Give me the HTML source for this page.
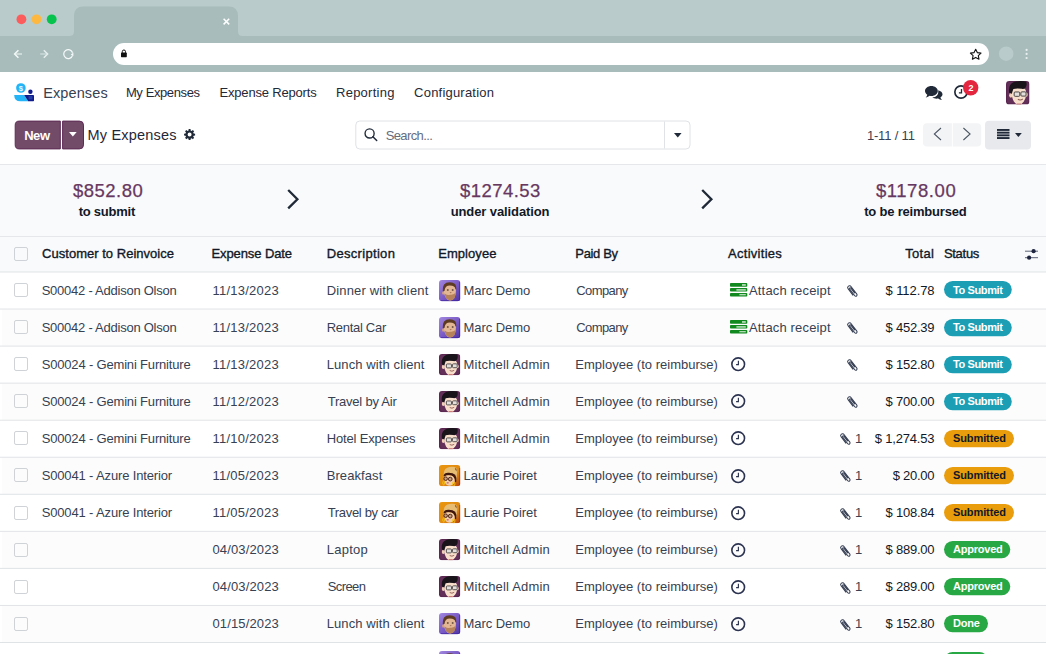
<!DOCTYPE html><html lang="en"><head><meta charset="utf-8"><title>Odoo - My Expenses</title><style>
*{box-sizing:border-box}
html,body{margin:0;padding:0}
body{width:1046px;height:654px;overflow:hidden;position:relative;background:#fff;font-family:'Liberation Sans',sans-serif;font-size:13px;color:#374151}
.t{position:absolute;white-space:pre}
.abs{position:absolute}
svg{position:absolute;overflow:visible}
.row{position:absolute;left:0;width:1046px}
.cb{position:absolute;left:14px;width:14px;height:14px;border:1px solid #d6d9de;border-radius:2px;background:#fff}
.badge{position:absolute;left:944px;height:17px;border-radius:9px}
.av{position:absolute;left:439px;width:21px;height:21px}
</style></head><body><header class="browser-chrome"><div class="abs" style="left:0;top:0;width:1046px;height:72px;background:#a7bcbb"></div><div class="abs" style="left:0;top:0;width:1046px;height:36px;background:#b9cbca"></div><svg style="left:0;top:0" width="1046" height="72" viewBox="0 0 1046 72"><path d="M69.5 36 Q74 36 74 31.5 L74 16 Q74 6.5 83.5 6.5 L228.5 6.5 Q238 6.5 238 16 L238 31.5 Q238 36 242.5 36 Z" fill="#a7bcbb"/><circle cx="21.4" cy="19.3" r="4.9" fill="#fd5c5c"/><circle cx="36.5" cy="19.3" r="4.9" fill="#fdb841"/><circle cx="51.7" cy="19.3" r="4.9" fill="#05c34c"/><path d="M223.6 18.8 L229.2 24.4 M229.2 18.8 L223.6 24.4" stroke="#fff" stroke-width="1.5" fill="none"/><path d="M22 54 H15.4" stroke="#dde7e6" stroke-width="1.4" fill="none"/><path d="M18.4 50.2 L14.6 54 L18.4 57.8" stroke="#f4f8f7" stroke-width="1.5" fill="none"/><path d="M40.2 54 H46.8" stroke="#cfdcdb" stroke-width="1.4" fill="none"/><path d="M43.8 50.2 L47.6 54 L43.8 57.8" stroke="#e6eeed" stroke-width="1.5" fill="none"/><path d="M72.55 52.8 A4.5 4.5 0 1 0 72.55 55.4" stroke="#f6f9f9" stroke-width="1.25" fill="none"/><path d="M70.7 54.6 L73.4 52.4 L73.4 56 Z" fill="#f6f9f9"/><rect x="113" y="43" width="876" height="22" rx="11" fill="#fff"/><rect x="121" y="52.6" width="5.8" height="4.6" rx="0.6" fill="#111"/><path d="M122.3 52.8 V51.6 A1.6 1.6 0 0 1 125.5 51.6 V52.8" stroke="#111" stroke-width="1" fill="none"/><path d="M975.7 49.2 L977.3 52.6 L981 53.1 L978.3 55.6 L979 59.2 L975.7 57.4 L972.4 59.2 L973.1 55.6 L970.4 53.1 L974.1 52.6 Z" stroke="#111" stroke-width="1.1" fill="none" stroke-linejoin="round"/><circle cx="1006.2" cy="53.7" r="7.3" fill="#b9cbca"/><circle cx="1026.6" cy="49.9" r="1.1" fill="#e8efee"/><circle cx="1026.6" cy="53.9" r="1.1" fill="#e8efee"/><circle cx="1026.6" cy="58" r="1.1" fill="#e8efee"/></svg></header><nav class="o_main_navbar"><svg style="left:13.5px;top:83.3px" width="20.5" height="18.6" viewBox="0 0 20.5 18.6"><circle cx="6.9" cy="5" r="4.8" fill="#22b4f6"/><text x="6.9" y="7.7" font-size="7.6" font-weight="700" fill="#e9f7fe" text-anchor="middle" font-family="Liberation Sans, sans-serif">$</text><circle cx="16.4" cy="8.7" r="2.2" fill="#111c8c"/><path d="M0.2 12 H10.1 L14.2 18.3 H6.4 Q0.2 18.3 0.2 12 Z" fill="#22b4f6"/><path d="M10.1 12 H19.3 Q20 12 20 12.7 V17.6 Q20 18.3 19.3 18.3 H14.2 Z" fill="#111c8c"/><rect x="14.6" y="13.1" width="3.8" height="3.3" fill="#2440a4"/></svg><span class="t" style="left:43.20px;top:82px;font-size:14.5px;line-height:22px;color:#374151;letter-spacing:0.110px;">Expenses</span><span class="t" style="left:125.90px;top:83px;font-size:13px;line-height:20px;color:#1f2937;letter-spacing:-0.393px;">My Expenses</span><span class="t" style="left:219.50px;top:83px;font-size:13px;line-height:20px;color:#1f2937;letter-spacing:-0.180px;">Expense Reports</span><span class="t" style="left:336.00px;top:83px;font-size:13px;line-height:20px;color:#1f2937;letter-spacing:0.258px;">Reporting</span><span class="t" style="left:414.10px;top:83px;font-size:13px;line-height:20px;color:#1f2937;letter-spacing:0.209px;">Configuration</span><svg style="left:924.5px;top:85.5px" width="17.5" height="14.5" viewBox="0 0 17.5 14.5"><path d="M13.2 4.2 C15.7 4.8 17.5 6.4 17.5 8.3 C17.5 9.6 16.7 10.7 15.4 11.5 C15.6 12.4 16.2 13.3 17 14 C15.5 14 14.1 13.4 13.2 12.6 C12.7 12.7 12.1 12.7 11.6 12.7 C9.9 12.7 8.4 12.2 7.3 11.5 C11.2 11.2 13.9 8.6 13.2 4.2 Z" fill="#1f2937"/><path d="M6.4 0 C9.9 0 12.8 2.2 12.8 5 C12.8 7.8 9.9 10 6.4 10 C5.8 10 5.2 9.9 4.7 9.8 C3.7 10.7 2.3 11.3 0.7 11.4 C1.5 10.7 2.1 9.8 2.3 8.8 C0.9 7.9 0 6.5 0 5 C0 2.2 2.9 0 6.4 0 Z" fill="#1f2937"/></svg><svg style="left:954.2px;top:85.1px" width="14" height="14" viewBox="0 0 14 14"><circle cx="7" cy="7" r="6.15" stroke="#1f2937" stroke-width="1.65" fill="#fff"/><path d="M7.5 3.9 V7.9 H4.9" stroke="#1f2937" stroke-width="1.3" fill="none"/></svg><svg style="left:963.2px;top:79.7px" width="15.4" height="15.4" viewBox="0 0 15.4 15.4"><circle cx="7.7" cy="7.7" r="7.7" fill="#e4273f"/></svg><span class="t" style="left:968.60px;top:81px;font-size:9px;line-height:14px;color:#fff;font-weight:700;">2</span><svg style="left:1005.5px;top:80.5px" width="23.5" height="23.5" viewBox="0 0 21 21"><defs><clipPath id="cpa"><rect width="21" height="21" rx="3"/></clipPath></defs><g clip-path="url(#cpa)"><rect width="21" height="21" fill="#5a2751"/><rect x="1" y="1" width="19" height="19" rx="2.4" fill="#633059"/><ellipse cx="4.3" cy="12.8" rx="1.5" ry="2.1" fill="#f0d0ba"/><ellipse cx="18.3" cy="12.2" rx="1.1" ry="1.9" fill="#f0d0ba"/><path d="M5 9.2 Q5 5.4 11.6 5.4 Q18 5.4 18 10 Q18.2 15.6 15.8 18.6 Q13.8 21.4 11.6 21.4 Q9 21.4 7 18.4 Q5 15 5 9.2 Z" fill="#f8dfcc"/><path d="M2.8 10.4 Q1.8 3.2 7 1 Q12.6 -0.8 18 0.6 Q19.2 3.2 17.4 6 Q16.4 7.4 14 7 Q9.6 6.2 6.6 7.2 Q5.8 9.2 5.2 11.4 Z" fill="#19141a"/><rect x="7.3" y="9.8" width="5" height="3.9" rx="0.9" fill="#e3dfdd" stroke="#45403f" stroke-width="0.85"/><rect x="13.3" y="9.7" width="4.6" height="3.8" rx="0.9" fill="#e3dfdd" stroke="#45403f" stroke-width="0.85"/><path d="M10.6 16.3 Q12.7 17.7 15 16.1" stroke="#8f5d52" stroke-width="0.9" fill="none"/><path d="M9.4 21 H13.6 V20.3 H9.4 Z" fill="#a3222e"/></g></svg></nav><section class="o_control_panel"><svg style="left:0;top:0" width="100" height="160" viewBox="0 0 100 160"><path d="M19.2 121.1 H60.3 V148.9 H19.2 Q15.2 148.9 15.2 144.9 V125.1 Q15.2 121.1 19.2 121.1 Z" fill="#714B67" stroke="#5e2b57" stroke-width="1"/><path d="M62.6 121.1 H79.5 Q83.5 121.1 83.5 125.1 V144.9 Q83.5 148.9 79.5 148.9 H62.6 Z" fill="#714B67" stroke="#5e2b57" stroke-width="1"/></svg><span class="t" style="left:24.20px;top:126px;font-size:13px;line-height:20px;color:#fff;font-weight:700;letter-spacing:-0.459px;">New</span><svg style="left:69px;top:131.9px" width="7.7" height="4.6" viewBox="0 0 7.7 4.6"><path d="M0 0 H7.7 L3.85 4.6 Z" fill="#fff"/></svg><span class="t" style="left:87.50px;top:124px;font-size:14.5px;line-height:22px;color:#1f2937;letter-spacing:0.201px;">My Expenses</span><svg style="left:184.2px;top:129.3px" width="11.2" height="11.2" viewBox="0 0 11.2 11.2"><path d="M11.12 4.65 L11.12 6.55 L9.67 6.64 L9.21 7.74 L10.17 8.83 L8.83 10.17 L7.74 9.21 L6.64 9.67 L6.55 11.12 L4.65 11.12 L4.56 9.67 L3.46 9.21 L2.37 10.17 L1.03 8.83 L1.99 7.74 L1.53 6.64 L0.08 6.55 L0.08 4.65 L1.53 4.56 L1.99 3.46 L1.03 2.37 L2.37 1.03 L3.46 1.99 L4.56 1.53 L4.65 0.08 L6.55 0.08 L6.64 1.53 L7.74 1.99 L8.83 1.03 L10.17 2.37 L9.21 3.46 L9.67 4.56 Z M7.6 5.6 A2 2 0 1 0 3.6 5.6 A2 2 0 1 0 7.6 5.6 Z" fill="#1f2937" fill-rule="evenodd"/></svg><svg style="left:0;top:0" width="700" height="160" viewBox="0 0 700 160"><rect x="355.8" y="121" width="334.2" height="28" rx="4" fill="#fff" stroke="#dfe2e6" stroke-width="1"/><path d="M664.5 121.5 V148.5" stroke="#dfe2e6" stroke-width="1"/></svg><svg style="left:364.4px;top:127.7px" width="13.4" height="13.2" viewBox="0 0 13.4 13.2"><circle cx="5.6" cy="5.5" r="4.55" stroke="#1f2937" stroke-width="1.35" fill="none"/><path d="M8.9 8.8 L12.7 12.5" stroke="#1f2937" stroke-width="1.5" stroke-linecap="round"/></svg><span class="t" style="left:385.70px;top:126px;font-size:13px;line-height:20px;color:#666d7c;letter-spacing:-0.614px;">Search...</span><svg style="left:673.7px;top:132.7px" width="7.6" height="4.6" viewBox="0 0 7.6 4.6"><path d="M0 0 H7.6 L3.8 4.6 Z" fill="#1f2937"/></svg><span class="t" style="left:866.90px;top:126px;font-size:13px;line-height:20px;color:#374151;letter-spacing:-0.169px;">1-11 / 11</span><svg style="left:0;top:0" width="1046" height="160" viewBox="0 0 1046 160"><path d="M927 123.2 H951.9 V146.6 H927 Q923 146.6 923 142.6 V127.2 Q923 123.2 927 123.2 Z" fill="#f3f4f6"/><path d="M952.8 123.2 H977.2 Q981.2 123.2 981.2 127.2 V142.6 Q981.2 146.6 977.2 146.6 H952.8 Z" fill="#f3f4f6"/><rect x="985" y="120.7" width="46" height="28.7" rx="4" fill="#e7e9ed"/></svg><svg style="left:923px;top:122.3px" width="58" height="24" viewBox="0 0 58 24"><path d="M18 6 L11.3 12 L18 18" stroke="#4b5563" stroke-width="1.05" fill="none"/><path d="M40.4 6 L47.1 12 L40.4 18" stroke="#4b5563" stroke-width="1.05" fill="none"/></svg><svg style="left:997px;top:129.4px" width="12.5" height="10" viewBox="0 0 12.5 10"><rect x="0" y="0" width="12.5" height="1.9" fill="#1f2937"/><rect x="0" y="2.7" width="12.5" height="1.9" fill="#1f2937"/><rect x="0" y="5.4" width="12.5" height="1.9" fill="#1f2937"/><rect x="0" y="8.1" width="12.5" height="1.9" fill="#1f2937"/></svg><svg style="left:1015px;top:132.8px" width="6.8" height="4" viewBox="0 0 6.8 4"><path d="M0 0 H6.8 L3.4 4 Z" fill="#1f2937"/></svg></section><section class="o_expense_dashboard"><div class="abs" style="left:0;top:164px;width:1046px;height:73px;background:#f9fafb;border-top:1px solid #e5e7eb;border-bottom:1px solid #e5e7eb"></div><span class="t" style="left:73.00px;top:177px;font-size:18.5px;line-height:28px;color:#68375f;letter-spacing:0.469px;-webkit-text-stroke:0.25px #68375f;">$852.80</span><span class="t" style="left:78.70px;top:202px;font-size:13px;line-height:20px;color:#111827;font-weight:700;letter-spacing:-0.233px;">to submit</span><span class="t" style="left:460.10px;top:177px;font-size:18.5px;line-height:28px;color:#68375f;letter-spacing:0.418px;-webkit-text-stroke:0.25px #68375f;">$1274.53</span><span class="t" style="left:450.70px;top:202px;font-size:13px;line-height:20px;color:#111827;font-weight:700;letter-spacing:-0.104px;">under validation</span><span class="t" style="left:875.90px;top:177px;font-size:18.5px;line-height:28px;color:#68375f;letter-spacing:0.571px;-webkit-text-stroke:0.25px #68375f;">$1178.00</span><span class="t" style="left:864.20px;top:202px;font-size:13px;line-height:20px;color:#111827;font-weight:700;letter-spacing:-0.195px;">to be reimbursed</span><svg style="left:287.4px;top:188.8px" width="12" height="20.4" viewBox="0 0 12 20.4"><path d="M1.2 1 L10.4 10.2 L1.2 19.4" stroke="#1f2937" stroke-width="2.3" fill="none"/></svg><svg style="left:700.6px;top:188.8px" width="12" height="20.4" viewBox="0 0 12 20.4"><path d="M1.2 1 L10.4 10.2 L1.2 19.4" stroke="#1f2937" stroke-width="2.3" fill="none"/></svg></section><main class="o_list_view"><div class="abs" style="left:0;top:237px;width:1046px;height:35px;background:#f9fafb"></div><div class="row" style="top:272px;height:37px;background:#fff"></div><div class="row" style="top:309px;height:37px;background:#fcfcfd;left:2px;width:1044px"></div><div class="row" style="top:346px;height:37px;background:#fff"></div><div class="row" style="top:383px;height:37px;background:#fcfcfd;left:2px;width:1044px"></div><div class="row" style="top:420px;height:37px;background:#fff"></div><div class="row" style="top:457px;height:37px;background:#fcfcfd;left:2px;width:1044px"></div><div class="row" style="top:494px;height:37px;background:#fff"></div><div class="row" style="top:531px;height:37px;background:#fcfcfd;left:2px;width:1044px"></div><div class="row" style="top:568px;height:37px;background:#fff"></div><div class="row" style="top:605px;height:37px;background:#fcfcfd;left:2px;width:1044px"></div><div class="row" style="top:642px;height:37px;background:#fff"></div><div class="abs" style="left:0px;top:271px;width:1046px;height:1px;background:rgba(224,227,230,0.50)"></div><div class="abs" style="left:0px;top:272px;width:1046px;height:1px;background:rgba(224,227,230,0.50)"></div><div class="abs" style="left:0px;top:308px;width:1046px;height:1px;background:rgba(224,227,230,0.45)"></div><div class="abs" style="left:0px;top:309px;width:1046px;height:1px;background:rgba(224,227,230,0.55)"></div><div class="abs" style="left:0px;top:345px;width:1046px;height:1px;background:rgba(224,227,230,0.40)"></div><div class="abs" style="left:0px;top:346px;width:1046px;height:1px;background:rgba(224,227,230,0.60)"></div><div class="abs" style="left:0px;top:382px;width:1046px;height:1px;background:rgba(224,227,230,0.35)"></div><div class="abs" style="left:0px;top:383px;width:1046px;height:1px;background:rgba(224,227,230,0.65)"></div><div class="abs" style="left:0px;top:419px;width:1046px;height:1px;background:rgba(224,227,230,0.30)"></div><div class="abs" style="left:0px;top:420px;width:1046px;height:1px;background:rgba(224,227,230,0.70)"></div><div class="abs" style="left:0px;top:456px;width:1046px;height:1px;background:rgba(224,227,230,0.25)"></div><div class="abs" style="left:0px;top:457px;width:1046px;height:1px;background:rgba(224,227,230,0.75)"></div><div class="abs" style="left:0px;top:493px;width:1046px;height:1px;background:rgba(224,227,230,0.20)"></div><div class="abs" style="left:0px;top:494px;width:1046px;height:1px;background:rgba(224,227,230,0.80)"></div><div class="abs" style="left:0px;top:530px;width:1046px;height:1px;background:rgba(224,227,230,0.15)"></div><div class="abs" style="left:0px;top:531px;width:1046px;height:1px;background:rgba(224,227,230,0.85)"></div><div class="abs" style="left:0px;top:567px;width:1046px;height:1px;background:rgba(224,227,230,0.10)"></div><div class="abs" style="left:0px;top:568px;width:1046px;height:1px;background:rgba(224,227,230,0.90)"></div><div class="abs" style="left:0px;top:604px;width:1046px;height:1px;background:rgba(224,227,230,0.05)"></div><div class="abs" style="left:0px;top:605px;width:1046px;height:1px;background:rgba(224,227,230,0.95)"></div><div class="abs" style="left:0px;top:642px;width:1046px;height:1px;background:rgba(224,227,230,1.00)"></div><div class="abs" style="left:0px;top:679px;width:1046px;height:1px;background:rgba(224,227,230,0.95)"></div><div class="abs" style="left:0px;top:680px;width:1046px;height:1px;background:rgba(224,227,230,0.05)"></div><svg style="left:14px;top:247.3px" width="14" height="14" viewBox="0 0 14 14"><rect x="0.5" y="0.5" width="13" height="13" rx="1.6" fill="none" stroke="#cfd2d6"/></svg><span class="t" style="left:42.10px;top:244px;font-size:13px;line-height:20px;color:#111827;-webkit-text-stroke:0.35px currentColor;letter-spacing:0.019px;">Customer to Reinvoice</span><span class="t" style="left:211.40px;top:244px;font-size:13px;line-height:20px;color:#111827;-webkit-text-stroke:0.35px currentColor;letter-spacing:-0.089px;">Expense Date</span><span class="t" style="left:326.70px;top:244px;font-size:13px;line-height:20px;color:#111827;-webkit-text-stroke:0.35px currentColor;letter-spacing:0.315px;">Description</span><span class="t" style="left:438.20px;top:244px;font-size:13px;line-height:20px;color:#111827;-webkit-text-stroke:0.35px currentColor;letter-spacing:0.067px;">Employee</span><span class="t" style="left:575.30px;top:244px;font-size:13px;line-height:20px;color:#111827;-webkit-text-stroke:0.35px currentColor;letter-spacing:-0.342px;">Paid By</span><span class="t" style="left:728.00px;top:244px;font-size:13px;line-height:20px;color:#111827;-webkit-text-stroke:0.35px currentColor;letter-spacing:0.285px;">Activities</span><span class="t" style="left:943.90px;top:244px;font-size:13px;line-height:20px;color:#111827;-webkit-text-stroke:0.35px currentColor;letter-spacing:-0.281px;">Status</span><span class="t" style="left:905.30px;top:244px;font-size:13px;line-height:20px;color:#111827;-webkit-text-stroke:0.35px currentColor;letter-spacing:0.270px;">Total</span><svg style="left:1025.4px;top:248.6px" width="13" height="11" viewBox="0 0 13 11"><path d="M0 2.2 H13 M0 8.7 H13" stroke="#5a6275" stroke-width="1"/><circle cx="8.6" cy="2.2" r="2.1" fill="#1f2540"/><circle cx="4.1" cy="8.7" r="2.1" fill="#1f2540"/></svg><svg style="left:14px;top:283.20px" width="14" height="14" viewBox="0 0 14 14"><rect x="0.5" y="0.5" width="13" height="13" rx="1.6" fill="none" stroke="#cfd2d6"/></svg><span class="t" style="left:41.70px;top:281px;font-size:13px;line-height:20px;color:#374151;letter-spacing:-0.247px;">S00042 - Addison Olson</span><span class="t" style="left:212.50px;top:281px;font-size:13px;line-height:20px;color:#374151;letter-spacing:0.237px;">11/13/2023</span><span class="t" style="left:326.70px;top:281px;font-size:13px;line-height:20px;color:#374151;letter-spacing:0.154px;">Dinner with client</span><svg style="left:438.9px;top:280.0px" width="21.3" height="21.3" viewBox="0 0 21 21"><defs><clipPath id="cm0"><rect width="21" height="21" rx="3"/></clipPath><linearGradient id="gm0" x1="0" y1="0" x2="1" y2="1"><stop offset="0" stop-color="#a287e0"/><stop offset="0.55" stop-color="#7758c4"/><stop offset="1" stop-color="#5034a4"/></linearGradient></defs><g clip-path="url(#cm0)"><rect width="21" height="21" fill="url(#gm0)"/><path d="M20.6 2 V21 M2 20.6 H21" stroke="#3b1f9c" stroke-width="0.9" fill="none"/><ellipse cx="4.1" cy="12.8" rx="1" ry="1.8" fill="#d6a27f"/><path d="M4.6 9.5 Q4.6 4.6 10.7 4.6 Q16.7 4.6 16.7 9.8 Q16.9 14.4 15.1 17.4 Q13.1 20.3 10.9 20.3 Q8.4 20.3 6.4 17 Q4.6 13.8 4.6 9.5 Z" fill="#e3b793"/><path d="M3.7 11.2 Q2.9 2.2 10.5 2.2 Q17.8 2.2 17.1 9.4 L16.2 9 Q15.9 5.6 10.7 5.5 Q6 5.5 5.4 10.8 Z" fill="#5c3b22"/><path d="M5.5 13.2 Q8.3 15.2 10.8 14.5 Q13.4 15.2 16.3 12.9 Q16.3 17.6 14.1 19.3 Q11 21 8.2 19.1 Q5.8 17 5.5 13.2 Z" fill="#b5825b"/><ellipse cx="8.7" cy="9.8" rx="1" ry="0.7" fill="#46332a"/><ellipse cx="13.5" cy="9.8" rx="1" ry="0.7" fill="#46332a"/><ellipse cx="11.5" cy="12.4" rx="0.9" ry="0.55" fill="#a8755a"/></g></svg><span class="t" style="left:463.60px;top:281px;font-size:13px;line-height:20px;color:#374151;letter-spacing:-0.068px;">Marc Demo</span><span class="t" style="left:576.30px;top:281px;font-size:13px;line-height:20px;color:#374151;letter-spacing:-0.606px;">Company</span><svg style="left:729.8px;top:283.1px" width="17.3" height="13.6" viewBox="0 0 17.3 13.6"><rect x="0" y="0.1" width="17.3" height="3.6" rx="0.8" fill="#12891f"/><rect x="0" y="5.1" width="17.3" height="3.5" rx="0.8" fill="#12891f"/><rect x="0" y="10" width="17.3" height="3.6" rx="0.8" fill="#12891f"/><rect x="12" y="1.1" width="3.8" height="1.7" fill="#b9dfbc"/><rect x="6.4" y="6" width="9.4" height="1.8" fill="#9fd2a4"/><rect x="9.4" y="11.2" width="6.4" height="1.1" fill="#d6eed8"/></svg><span class="t" style="left:749.00px;top:281px;font-size:13px;line-height:20px;color:#374151;letter-spacing:0.164px;">Attach receipt</span><svg style="left:846.6px;top:285.2px" width="10.7" height="11.8" viewBox="0 0 10.7 11.8"><g transform="translate(5.35 6.3) rotate(143) translate(-2.3 -7)"><path d="M4.15 3.6 V11.7 A1.85 1.85 0 0 1 0.45 11.7 V2 A1.3 1.3 0 0 1 3.05 2 V10.4 A0.75 0.75 0 0 1 1.55 10.4 V4.4" stroke="#343d52" stroke-width="1.0" fill="none" stroke-linecap="round"/></g></svg><span class="t" style="left:885.50px;top:281px;font-size:13px;line-height:20px;color:#111827;letter-spacing:-0.087px;">$ 112.78</span><svg style="left:943.8px;top:281.45px" width="67.8" height="17.2" viewBox="0 0 67.8 17.2"><rect width="67.8" height="17.2" rx="8.6" fill="#1c9fb5"/></svg><span class="t" style="left:953.00px;top:282px;font-size:11px;line-height:16px;color:#fff;font-weight:700;letter-spacing:-0.386px;">To Submit</span><svg style="left:14px;top:320.25px" width="14" height="14" viewBox="0 0 14 14"><rect x="0.5" y="0.5" width="13" height="13" rx="1.6" fill="none" stroke="#cfd2d6"/></svg><span class="t" style="left:41.70px;top:318px;font-size:13px;line-height:20px;color:#374151;letter-spacing:-0.247px;">S00042 - Addison Olson</span><span class="t" style="left:212.50px;top:318px;font-size:13px;line-height:20px;color:#374151;letter-spacing:0.237px;">11/13/2023</span><span class="t" style="left:326.70px;top:318px;font-size:13px;line-height:20px;color:#374151;letter-spacing:-0.290px;">Rental Car</span><svg style="left:438.9px;top:317.05px" width="21.3" height="21.3" viewBox="0 0 21 21"><defs><clipPath id="cm1"><rect width="21" height="21" rx="3"/></clipPath><linearGradient id="gm1" x1="0" y1="0" x2="1" y2="1"><stop offset="0" stop-color="#a287e0"/><stop offset="0.55" stop-color="#7758c4"/><stop offset="1" stop-color="#5034a4"/></linearGradient></defs><g clip-path="url(#cm1)"><rect width="21" height="21" fill="url(#gm1)"/><path d="M20.6 2 V21 M2 20.6 H21" stroke="#3b1f9c" stroke-width="0.9" fill="none"/><ellipse cx="4.1" cy="12.8" rx="1" ry="1.8" fill="#d6a27f"/><path d="M4.6 9.5 Q4.6 4.6 10.7 4.6 Q16.7 4.6 16.7 9.8 Q16.9 14.4 15.1 17.4 Q13.1 20.3 10.9 20.3 Q8.4 20.3 6.4 17 Q4.6 13.8 4.6 9.5 Z" fill="#e3b793"/><path d="M3.7 11.2 Q2.9 2.2 10.5 2.2 Q17.8 2.2 17.1 9.4 L16.2 9 Q15.9 5.6 10.7 5.5 Q6 5.5 5.4 10.8 Z" fill="#5c3b22"/><path d="M5.5 13.2 Q8.3 15.2 10.8 14.5 Q13.4 15.2 16.3 12.9 Q16.3 17.6 14.1 19.3 Q11 21 8.2 19.1 Q5.8 17 5.5 13.2 Z" fill="#b5825b"/><ellipse cx="8.7" cy="9.8" rx="1" ry="0.7" fill="#46332a"/><ellipse cx="13.5" cy="9.8" rx="1" ry="0.7" fill="#46332a"/><ellipse cx="11.5" cy="12.4" rx="0.9" ry="0.55" fill="#a8755a"/></g></svg><span class="t" style="left:463.60px;top:318px;font-size:13px;line-height:20px;color:#374151;letter-spacing:-0.068px;">Marc Demo</span><span class="t" style="left:576.30px;top:318px;font-size:13px;line-height:20px;color:#374151;letter-spacing:-0.606px;">Company</span><svg style="left:729.8px;top:320.15000000000003px" width="17.3" height="13.6" viewBox="0 0 17.3 13.6"><rect x="0" y="0.1" width="17.3" height="3.6" rx="0.8" fill="#12891f"/><rect x="0" y="5.1" width="17.3" height="3.5" rx="0.8" fill="#12891f"/><rect x="0" y="10" width="17.3" height="3.6" rx="0.8" fill="#12891f"/><rect x="12" y="1.1" width="3.8" height="1.7" fill="#b9dfbc"/><rect x="6.4" y="6" width="9.4" height="1.8" fill="#9fd2a4"/><rect x="9.4" y="11.2" width="6.4" height="1.1" fill="#d6eed8"/></svg><span class="t" style="left:749.00px;top:318px;font-size:13px;line-height:20px;color:#374151;letter-spacing:0.164px;">Attach receipt</span><svg style="left:846.6px;top:322.25px" width="10.7" height="11.8" viewBox="0 0 10.7 11.8"><g transform="translate(5.35 6.3) rotate(143) translate(-2.3 -7)"><path d="M4.15 3.6 V11.7 A1.85 1.85 0 0 1 0.45 11.7 V2 A1.3 1.3 0 0 1 3.05 2 V10.4 A0.75 0.75 0 0 1 1.55 10.4 V4.4" stroke="#343d52" stroke-width="1.0" fill="none" stroke-linecap="round"/></g></svg><span class="t" style="left:885.50px;top:318px;font-size:13px;line-height:20px;color:#111827;letter-spacing:-0.225px;">$ 452.39</span><svg style="left:943.8px;top:318.50px" width="67.8" height="17.2" viewBox="0 0 67.8 17.2"><rect width="67.8" height="17.2" rx="8.6" fill="#1c9fb5"/></svg><span class="t" style="left:953.00px;top:319px;font-size:11px;line-height:16px;color:#fff;font-weight:700;letter-spacing:-0.386px;">To Submit</span><svg style="left:14px;top:357.30px" width="14" height="14" viewBox="0 0 14 14"><rect x="0.5" y="0.5" width="13" height="13" rx="1.6" fill="none" stroke="#cfd2d6"/></svg><span class="t" style="left:41.70px;top:355px;font-size:13px;line-height:20px;color:#374151;letter-spacing:-0.173px;">S00024 - Gemini Furniture</span><span class="t" style="left:212.50px;top:355px;font-size:13px;line-height:20px;color:#374151;letter-spacing:0.237px;">11/13/2023</span><span class="t" style="left:326.70px;top:355px;font-size:13px;line-height:20px;color:#374151;letter-spacing:0.100px;">Lunch with client</span><svg style="left:438.9px;top:354.1px" width="21.3" height="21.3" viewBox="0 0 21 21"><defs><clipPath id="cpa2"><rect width="21" height="21" rx="3"/></clipPath></defs><g clip-path="url(#cpa2)"><rect width="21" height="21" fill="#5a2751"/><rect x="1" y="1" width="19" height="19" rx="2.4" fill="#633059"/><ellipse cx="4.3" cy="12.8" rx="1.5" ry="2.1" fill="#f0d0ba"/><ellipse cx="18.3" cy="12.2" rx="1.1" ry="1.9" fill="#f0d0ba"/><path d="M5 9.2 Q5 5.4 11.6 5.4 Q18 5.4 18 10 Q18.2 15.6 15.8 18.6 Q13.8 21.4 11.6 21.4 Q9 21.4 7 18.4 Q5 15 5 9.2 Z" fill="#f8dfcc"/><path d="M2.8 10.4 Q1.8 3.2 7 1 Q12.6 -0.8 18 0.6 Q19.2 3.2 17.4 6 Q16.4 7.4 14 7 Q9.6 6.2 6.6 7.2 Q5.8 9.2 5.2 11.4 Z" fill="#19141a"/><rect x="7.3" y="9.8" width="5" height="3.9" rx="0.9" fill="#e3dfdd" stroke="#45403f" stroke-width="0.85"/><rect x="13.3" y="9.7" width="4.6" height="3.8" rx="0.9" fill="#e3dfdd" stroke="#45403f" stroke-width="0.85"/><path d="M10.6 16.3 Q12.7 17.7 15 16.1" stroke="#8f5d52" stroke-width="0.9" fill="none"/><path d="M9.4 21 H13.6 V20.3 H9.4 Z" fill="#a3222e"/></g></svg><span class="t" style="left:463.60px;top:355px;font-size:13px;line-height:20px;color:#374151;letter-spacing:0.185px;">Mitchell Admin</span><span class="t" style="left:575.30px;top:355px;font-size:13px;line-height:20px;color:#374151;letter-spacing:0.014px;">Employee (to reimburse)</span><svg style="left:731.05px;top:357.35px" width="14.4" height="14.4" viewBox="0 0 14.4 14.4"><circle cx="7.2" cy="7.2" r="6.35" stroke="#2b3350" stroke-width="1.6" fill="none"/><path d="M7.4 3.8 V7.7 H5.1" stroke="#2b3350" stroke-width="1.15" fill="none"/></svg><svg style="left:846.6px;top:359.3px" width="10.7" height="11.8" viewBox="0 0 10.7 11.8"><g transform="translate(5.35 6.3) rotate(143) translate(-2.3 -7)"><path d="M4.15 3.6 V11.7 A1.85 1.85 0 0 1 0.45 11.7 V2 A1.3 1.3 0 0 1 3.05 2 V10.4 A0.75 0.75 0 0 1 1.55 10.4 V4.4" stroke="#343d52" stroke-width="1.0" fill="none" stroke-linecap="round"/></g></svg><span class="t" style="left:885.50px;top:355px;font-size:13px;line-height:20px;color:#111827;letter-spacing:-0.225px;">$ 152.80</span><svg style="left:943.8px;top:355.55px" width="67.8" height="17.2" viewBox="0 0 67.8 17.2"><rect width="67.8" height="17.2" rx="8.6" fill="#1c9fb5"/></svg><span class="t" style="left:953.00px;top:356px;font-size:11px;line-height:16px;color:#fff;font-weight:700;letter-spacing:-0.386px;">To Submit</span><svg style="left:14px;top:394.35px" width="14" height="14" viewBox="0 0 14 14"><rect x="0.5" y="0.5" width="13" height="13" rx="1.6" fill="none" stroke="#cfd2d6"/></svg><span class="t" style="left:41.70px;top:392px;font-size:13px;line-height:20px;color:#374151;letter-spacing:-0.173px;">S00024 - Gemini Furniture</span><span class="t" style="left:212.50px;top:392px;font-size:13px;line-height:20px;color:#374151;letter-spacing:0.237px;">11/12/2023</span><span class="t" style="left:327.70px;top:392px;font-size:13px;line-height:20px;color:#374151;letter-spacing:-0.221px;">Travel by Air</span><svg style="left:438.9px;top:391.15px" width="21.3" height="21.3" viewBox="0 0 21 21"><defs><clipPath id="cpa3"><rect width="21" height="21" rx="3"/></clipPath></defs><g clip-path="url(#cpa3)"><rect width="21" height="21" fill="#5a2751"/><rect x="1" y="1" width="19" height="19" rx="2.4" fill="#633059"/><ellipse cx="4.3" cy="12.8" rx="1.5" ry="2.1" fill="#f0d0ba"/><ellipse cx="18.3" cy="12.2" rx="1.1" ry="1.9" fill="#f0d0ba"/><path d="M5 9.2 Q5 5.4 11.6 5.4 Q18 5.4 18 10 Q18.2 15.6 15.8 18.6 Q13.8 21.4 11.6 21.4 Q9 21.4 7 18.4 Q5 15 5 9.2 Z" fill="#f8dfcc"/><path d="M2.8 10.4 Q1.8 3.2 7 1 Q12.6 -0.8 18 0.6 Q19.2 3.2 17.4 6 Q16.4 7.4 14 7 Q9.6 6.2 6.6 7.2 Q5.8 9.2 5.2 11.4 Z" fill="#19141a"/><rect x="7.3" y="9.8" width="5" height="3.9" rx="0.9" fill="#e3dfdd" stroke="#45403f" stroke-width="0.85"/><rect x="13.3" y="9.7" width="4.6" height="3.8" rx="0.9" fill="#e3dfdd" stroke="#45403f" stroke-width="0.85"/><path d="M10.6 16.3 Q12.7 17.7 15 16.1" stroke="#8f5d52" stroke-width="0.9" fill="none"/><path d="M9.4 21 H13.6 V20.3 H9.4 Z" fill="#a3222e"/></g></svg><span class="t" style="left:463.60px;top:392px;font-size:13px;line-height:20px;color:#374151;letter-spacing:0.185px;">Mitchell Admin</span><span class="t" style="left:575.30px;top:392px;font-size:13px;line-height:20px;color:#374151;letter-spacing:0.014px;">Employee (to reimburse)</span><svg style="left:731.05px;top:394.4px" width="14.4" height="14.4" viewBox="0 0 14.4 14.4"><circle cx="7.2" cy="7.2" r="6.35" stroke="#2b3350" stroke-width="1.6" fill="none"/><path d="M7.4 3.8 V7.7 H5.1" stroke="#2b3350" stroke-width="1.15" fill="none"/></svg><svg style="left:846.6px;top:396.34999999999997px" width="10.7" height="11.8" viewBox="0 0 10.7 11.8"><g transform="translate(5.35 6.3) rotate(143) translate(-2.3 -7)"><path d="M4.15 3.6 V11.7 A1.85 1.85 0 0 1 0.45 11.7 V2 A1.3 1.3 0 0 1 3.05 2 V10.4 A0.75 0.75 0 0 1 1.55 10.4 V4.4" stroke="#343d52" stroke-width="1.0" fill="none" stroke-linecap="round"/></g></svg><span class="t" style="left:885.50px;top:392px;font-size:13px;line-height:20px;color:#111827;letter-spacing:-0.225px;">$ 700.00</span><svg style="left:943.8px;top:392.60px" width="67.8" height="17.2" viewBox="0 0 67.8 17.2"><rect width="67.8" height="17.2" rx="8.6" fill="#1c9fb5"/></svg><span class="t" style="left:953.00px;top:393px;font-size:11px;line-height:16px;color:#fff;font-weight:700;letter-spacing:-0.386px;">To Submit</span><svg style="left:14px;top:431.40px" width="14" height="14" viewBox="0 0 14 14"><rect x="0.5" y="0.5" width="13" height="13" rx="1.6" fill="none" stroke="#cfd2d6"/></svg><span class="t" style="left:41.70px;top:429px;font-size:13px;line-height:20px;color:#374151;letter-spacing:-0.173px;">S00024 - Gemini Furniture</span><span class="t" style="left:212.50px;top:429px;font-size:13px;line-height:20px;color:#374151;letter-spacing:0.237px;">11/10/2023</span><span class="t" style="left:326.70px;top:429px;font-size:13px;line-height:20px;color:#374151;letter-spacing:-0.165px;">Hotel Expenses</span><svg style="left:438.9px;top:428.2px" width="21.3" height="21.3" viewBox="0 0 21 21"><defs><clipPath id="cpa4"><rect width="21" height="21" rx="3"/></clipPath></defs><g clip-path="url(#cpa4)"><rect width="21" height="21" fill="#5a2751"/><rect x="1" y="1" width="19" height="19" rx="2.4" fill="#633059"/><ellipse cx="4.3" cy="12.8" rx="1.5" ry="2.1" fill="#f0d0ba"/><ellipse cx="18.3" cy="12.2" rx="1.1" ry="1.9" fill="#f0d0ba"/><path d="M5 9.2 Q5 5.4 11.6 5.4 Q18 5.4 18 10 Q18.2 15.6 15.8 18.6 Q13.8 21.4 11.6 21.4 Q9 21.4 7 18.4 Q5 15 5 9.2 Z" fill="#f8dfcc"/><path d="M2.8 10.4 Q1.8 3.2 7 1 Q12.6 -0.8 18 0.6 Q19.2 3.2 17.4 6 Q16.4 7.4 14 7 Q9.6 6.2 6.6 7.2 Q5.8 9.2 5.2 11.4 Z" fill="#19141a"/><rect x="7.3" y="9.8" width="5" height="3.9" rx="0.9" fill="#e3dfdd" stroke="#45403f" stroke-width="0.85"/><rect x="13.3" y="9.7" width="4.6" height="3.8" rx="0.9" fill="#e3dfdd" stroke="#45403f" stroke-width="0.85"/><path d="M10.6 16.3 Q12.7 17.7 15 16.1" stroke="#8f5d52" stroke-width="0.9" fill="none"/><path d="M9.4 21 H13.6 V20.3 H9.4 Z" fill="#a3222e"/></g></svg><span class="t" style="left:463.60px;top:429px;font-size:13px;line-height:20px;color:#374151;letter-spacing:0.185px;">Mitchell Admin</span><span class="t" style="left:575.30px;top:429px;font-size:13px;line-height:20px;color:#374151;letter-spacing:0.014px;">Employee (to reimburse)</span><svg style="left:731.05px;top:431.45px" width="14.4" height="14.4" viewBox="0 0 14.4 14.4"><circle cx="7.2" cy="7.2" r="6.35" stroke="#2b3350" stroke-width="1.6" fill="none"/><path d="M7.4 3.8 V7.7 H5.1" stroke="#2b3350" stroke-width="1.15" fill="none"/></svg><svg style="left:840px;top:433.4px" width="10.7" height="11.8" viewBox="0 0 10.7 11.8"><g transform="translate(5.35 6.3) rotate(143) translate(-2.3 -7)"><path d="M4.15 3.6 V11.7 A1.85 1.85 0 0 1 0.45 11.7 V2 A1.3 1.3 0 0 1 3.05 2 V10.4 A0.75 0.75 0 0 1 1.55 10.4 V4.4" stroke="#343d52" stroke-width="1.0" fill="none" stroke-linecap="round"/></g></svg><span class="t" style="left:854.90px;top:429px;font-size:13px;line-height:20px;color:#374151;">1</span><span class="t" style="left:874.70px;top:429px;font-size:13px;line-height:20px;color:#111827;letter-spacing:-0.179px;">$ 1,274.53</span><svg style="left:943.8px;top:429.65px" width="70" height="17.2" viewBox="0 0 70 17.2"><rect width="70" height="17.2" rx="8.6" fill="#e99d0d"/></svg><span class="t" style="left:953.00px;top:430px;font-size:11px;line-height:16px;color:#111827;font-weight:700;letter-spacing:-0.107px;">Submitted</span><svg style="left:14px;top:468.45px" width="14" height="14" viewBox="0 0 14 14"><rect x="0.5" y="0.5" width="13" height="13" rx="1.6" fill="none" stroke="#cfd2d6"/></svg><span class="t" style="left:41.70px;top:466px;font-size:13px;line-height:20px;color:#374151;letter-spacing:-0.149px;">S00041 - Azure Interior</span><span class="t" style="left:212.50px;top:466px;font-size:13px;line-height:20px;color:#374151;letter-spacing:0.237px;">11/05/2023</span><span class="t" style="left:326.70px;top:466px;font-size:13px;line-height:20px;color:#374151;letter-spacing:0.087px;">Breakfast</span><svg style="left:438.9px;top:465.25px" width="21.3" height="21.3" viewBox="0 0 21 21"><defs><clipPath id="cl5"><rect width="21" height="21" rx="3"/></clipPath><linearGradient id="gl5" x1="0" y1="0" x2="1" y2="1"><stop offset="0" stop-color="#ea960f"/><stop offset="0.6" stop-color="#e08912"/><stop offset="1" stop-color="#b23f0e"/></linearGradient></defs><g clip-path="url(#cl5)"><rect width="21" height="21" fill="url(#gl5)"/><path d="M20.6 3 V21" stroke="#a72c0c" stroke-width="0.9" fill="none"/><path d="M4.6 9 Q4.8 2.6 10.6 2 Q15 1.2 17.2 3.2 Q18.6 6 17.6 9.6 Q17.8 14.6 16 17 L14.4 10 Q9 9.4 5.2 10 Z" fill="#e7bd74"/><path d="M15.6 2.8 Q17.6 3.4 17.4 6.4 Q16.2 5.6 15.6 2.8 Z" fill="#6b3a1c"/><path d="M4.6 10.6 Q5 7.6 9 7.6 Q13.6 7.4 16 9.6 Q17.6 12 17 16.4 L15.6 17 Q15.8 12 12.6 10.6 Q8.6 9.4 5.4 11.6 Z" fill="#3f170d"/><path d="M5.4 11 Q9 9.4 12.6 10.6 Q15.8 12.4 15.4 16.4 Q14 20.2 10.4 20.4 Q7.4 20.4 6 17.4 Q5 14 5.4 11 Z" fill="#f2cfad"/><circle cx="6.6" cy="13.5" r="1.75" fill="#c79e7c" stroke="#4a1f12" stroke-width="0.9"/><circle cx="11.1" cy="13.9" r="1.85" fill="#c79e7c" stroke="#4a1f12" stroke-width="0.9"/><ellipse cx="8.6" cy="17.6" rx="1.2" ry="0.6" fill="#cf4a50"/><ellipse cx="4.6" cy="17.7" rx="0.9" ry="1.9" fill="none" stroke="#f5c21a" stroke-width="0.9"/><ellipse cx="14.5" cy="18.6" rx="1.2" ry="2.1" fill="none" stroke="#f5c21a" stroke-width="0.9"/></g></svg><span class="t" style="left:463.60px;top:466px;font-size:13px;line-height:20px;color:#374151;letter-spacing:-0.033px;">Laurie Poiret</span><span class="t" style="left:575.30px;top:466px;font-size:13px;line-height:20px;color:#374151;letter-spacing:0.014px;">Employee (to reimburse)</span><svg style="left:731.05px;top:468.5px" width="14.4" height="14.4" viewBox="0 0 14.4 14.4"><circle cx="7.2" cy="7.2" r="6.35" stroke="#2b3350" stroke-width="1.6" fill="none"/><path d="M7.4 3.8 V7.7 H5.1" stroke="#2b3350" stroke-width="1.15" fill="none"/></svg><svg style="left:840px;top:470.45px" width="10.7" height="11.8" viewBox="0 0 10.7 11.8"><g transform="translate(5.35 6.3) rotate(143) translate(-2.3 -7)"><path d="M4.15 3.6 V11.7 A1.85 1.85 0 0 1 0.45 11.7 V2 A1.3 1.3 0 0 1 3.05 2 V10.4 A0.75 0.75 0 0 1 1.55 10.4 V4.4" stroke="#343d52" stroke-width="1.0" fill="none" stroke-linecap="round"/></g></svg><span class="t" style="left:854.90px;top:466px;font-size:13px;line-height:20px;color:#374151;">1</span><span class="t" style="left:892.80px;top:466px;font-size:13px;line-height:20px;color:#111827;letter-spacing:-0.274px;">$ 20.00</span><svg style="left:943.8px;top:466.70px" width="70" height="17.2" viewBox="0 0 70 17.2"><rect width="70" height="17.2" rx="8.6" fill="#e99d0d"/></svg><span class="t" style="left:953.00px;top:467px;font-size:11px;line-height:16px;color:#111827;font-weight:700;letter-spacing:-0.107px;">Submitted</span><svg style="left:14px;top:505.50px" width="14" height="14" viewBox="0 0 14 14"><rect x="0.5" y="0.5" width="13" height="13" rx="1.6" fill="none" stroke="#cfd2d6"/></svg><span class="t" style="left:41.70px;top:503px;font-size:13px;line-height:20px;color:#374151;letter-spacing:-0.149px;">S00041 - Azure Interior</span><span class="t" style="left:212.50px;top:503px;font-size:13px;line-height:20px;color:#374151;letter-spacing:0.237px;">11/05/2023</span><span class="t" style="left:327.70px;top:503px;font-size:13px;line-height:20px;color:#374151;letter-spacing:-0.318px;">Travel by car</span><svg style="left:438.9px;top:502.3px" width="21.3" height="21.3" viewBox="0 0 21 21"><defs><clipPath id="cl6"><rect width="21" height="21" rx="3"/></clipPath><linearGradient id="gl6" x1="0" y1="0" x2="1" y2="1"><stop offset="0" stop-color="#ea960f"/><stop offset="0.6" stop-color="#e08912"/><stop offset="1" stop-color="#b23f0e"/></linearGradient></defs><g clip-path="url(#cl6)"><rect width="21" height="21" fill="url(#gl6)"/><path d="M20.6 3 V21" stroke="#a72c0c" stroke-width="0.9" fill="none"/><path d="M4.6 9 Q4.8 2.6 10.6 2 Q15 1.2 17.2 3.2 Q18.6 6 17.6 9.6 Q17.8 14.6 16 17 L14.4 10 Q9 9.4 5.2 10 Z" fill="#e7bd74"/><path d="M15.6 2.8 Q17.6 3.4 17.4 6.4 Q16.2 5.6 15.6 2.8 Z" fill="#6b3a1c"/><path d="M4.6 10.6 Q5 7.6 9 7.6 Q13.6 7.4 16 9.6 Q17.6 12 17 16.4 L15.6 17 Q15.8 12 12.6 10.6 Q8.6 9.4 5.4 11.6 Z" fill="#3f170d"/><path d="M5.4 11 Q9 9.4 12.6 10.6 Q15.8 12.4 15.4 16.4 Q14 20.2 10.4 20.4 Q7.4 20.4 6 17.4 Q5 14 5.4 11 Z" fill="#f2cfad"/><circle cx="6.6" cy="13.5" r="1.75" fill="#c79e7c" stroke="#4a1f12" stroke-width="0.9"/><circle cx="11.1" cy="13.9" r="1.85" fill="#c79e7c" stroke="#4a1f12" stroke-width="0.9"/><ellipse cx="8.6" cy="17.6" rx="1.2" ry="0.6" fill="#cf4a50"/><ellipse cx="4.6" cy="17.7" rx="0.9" ry="1.9" fill="none" stroke="#f5c21a" stroke-width="0.9"/><ellipse cx="14.5" cy="18.6" rx="1.2" ry="2.1" fill="none" stroke="#f5c21a" stroke-width="0.9"/></g></svg><span class="t" style="left:463.60px;top:503px;font-size:13px;line-height:20px;color:#374151;letter-spacing:-0.033px;">Laurie Poiret</span><span class="t" style="left:575.30px;top:503px;font-size:13px;line-height:20px;color:#374151;letter-spacing:0.014px;">Employee (to reimburse)</span><svg style="left:731.05px;top:505.55px" width="14.4" height="14.4" viewBox="0 0 14.4 14.4"><circle cx="7.2" cy="7.2" r="6.35" stroke="#2b3350" stroke-width="1.6" fill="none"/><path d="M7.4 3.8 V7.7 H5.1" stroke="#2b3350" stroke-width="1.15" fill="none"/></svg><svg style="left:840px;top:507.5px" width="10.7" height="11.8" viewBox="0 0 10.7 11.8"><g transform="translate(5.35 6.3) rotate(143) translate(-2.3 -7)"><path d="M4.15 3.6 V11.7 A1.85 1.85 0 0 1 0.45 11.7 V2 A1.3 1.3 0 0 1 3.05 2 V10.4 A0.75 0.75 0 0 1 1.55 10.4 V4.4" stroke="#343d52" stroke-width="1.0" fill="none" stroke-linecap="round"/></g></svg><span class="t" style="left:854.90px;top:503px;font-size:13px;line-height:20px;color:#374151;">1</span><span class="t" style="left:885.50px;top:503px;font-size:13px;line-height:20px;color:#111827;letter-spacing:-0.225px;">$ 108.84</span><svg style="left:943.8px;top:503.75px" width="70" height="17.2" viewBox="0 0 70 17.2"><rect width="70" height="17.2" rx="8.6" fill="#e99d0d"/></svg><span class="t" style="left:953.00px;top:504px;font-size:11px;line-height:16px;color:#111827;font-weight:700;letter-spacing:-0.107px;">Submitted</span><svg style="left:14px;top:542.55px" width="14" height="14" viewBox="0 0 14 14"><rect x="0.5" y="0.5" width="13" height="13" rx="1.6" fill="none" stroke="#cfd2d6"/></svg><span class="t" style="left:212.50px;top:540px;font-size:13px;line-height:20px;color:#374151;letter-spacing:0.130px;">04/03/2023</span><span class="t" style="left:326.70px;top:540px;font-size:13px;line-height:20px;color:#374151;letter-spacing:0.274px;">Laptop</span><svg style="left:438.9px;top:539.35px" width="21.3" height="21.3" viewBox="0 0 21 21"><defs><clipPath id="cpa7"><rect width="21" height="21" rx="3"/></clipPath></defs><g clip-path="url(#cpa7)"><rect width="21" height="21" fill="#5a2751"/><rect x="1" y="1" width="19" height="19" rx="2.4" fill="#633059"/><ellipse cx="4.3" cy="12.8" rx="1.5" ry="2.1" fill="#f0d0ba"/><ellipse cx="18.3" cy="12.2" rx="1.1" ry="1.9" fill="#f0d0ba"/><path d="M5 9.2 Q5 5.4 11.6 5.4 Q18 5.4 18 10 Q18.2 15.6 15.8 18.6 Q13.8 21.4 11.6 21.4 Q9 21.4 7 18.4 Q5 15 5 9.2 Z" fill="#f8dfcc"/><path d="M2.8 10.4 Q1.8 3.2 7 1 Q12.6 -0.8 18 0.6 Q19.2 3.2 17.4 6 Q16.4 7.4 14 7 Q9.6 6.2 6.6 7.2 Q5.8 9.2 5.2 11.4 Z" fill="#19141a"/><rect x="7.3" y="9.8" width="5" height="3.9" rx="0.9" fill="#e3dfdd" stroke="#45403f" stroke-width="0.85"/><rect x="13.3" y="9.7" width="4.6" height="3.8" rx="0.9" fill="#e3dfdd" stroke="#45403f" stroke-width="0.85"/><path d="M10.6 16.3 Q12.7 17.7 15 16.1" stroke="#8f5d52" stroke-width="0.9" fill="none"/><path d="M9.4 21 H13.6 V20.3 H9.4 Z" fill="#a3222e"/></g></svg><span class="t" style="left:463.60px;top:540px;font-size:13px;line-height:20px;color:#374151;letter-spacing:0.185px;">Mitchell Admin</span><span class="t" style="left:575.30px;top:540px;font-size:13px;line-height:20px;color:#374151;letter-spacing:0.014px;">Employee (to reimburse)</span><svg style="left:731.05px;top:542.6px" width="14.4" height="14.4" viewBox="0 0 14.4 14.4"><circle cx="7.2" cy="7.2" r="6.35" stroke="#2b3350" stroke-width="1.6" fill="none"/><path d="M7.4 3.8 V7.7 H5.1" stroke="#2b3350" stroke-width="1.15" fill="none"/></svg><svg style="left:840px;top:544.5500000000001px" width="10.7" height="11.8" viewBox="0 0 10.7 11.8"><g transform="translate(5.35 6.3) rotate(143) translate(-2.3 -7)"><path d="M4.15 3.6 V11.7 A1.85 1.85 0 0 1 0.45 11.7 V2 A1.3 1.3 0 0 1 3.05 2 V10.4 A0.75 0.75 0 0 1 1.55 10.4 V4.4" stroke="#343d52" stroke-width="1.0" fill="none" stroke-linecap="round"/></g></svg><span class="t" style="left:854.90px;top:540px;font-size:13px;line-height:20px;color:#374151;">1</span><span class="t" style="left:885.50px;top:540px;font-size:13px;line-height:20px;color:#111827;letter-spacing:-0.225px;">$ 889.00</span><svg style="left:943.8px;top:540.80px" width="66.3" height="17.2" viewBox="0 0 66.3 17.2"><rect width="66.3" height="17.2" rx="8.6" fill="#28a745"/></svg><span class="t" style="left:953.00px;top:541px;font-size:11px;line-height:16px;color:#fff;font-weight:700;letter-spacing:-0.217px;">Approved</span><svg style="left:14px;top:579.60px" width="14" height="14" viewBox="0 0 14 14"><rect x="0.5" y="0.5" width="13" height="13" rx="1.6" fill="none" stroke="#cfd2d6"/></svg><span class="t" style="left:212.50px;top:577px;font-size:13px;line-height:20px;color:#374151;letter-spacing:0.130px;">04/03/2023</span><span class="t" style="left:327.70px;top:577px;font-size:13px;line-height:20px;color:#374151;letter-spacing:-0.592px;">Screen</span><svg style="left:438.9px;top:576.4px" width="21.3" height="21.3" viewBox="0 0 21 21"><defs><clipPath id="cpa8"><rect width="21" height="21" rx="3"/></clipPath></defs><g clip-path="url(#cpa8)"><rect width="21" height="21" fill="#5a2751"/><rect x="1" y="1" width="19" height="19" rx="2.4" fill="#633059"/><ellipse cx="4.3" cy="12.8" rx="1.5" ry="2.1" fill="#f0d0ba"/><ellipse cx="18.3" cy="12.2" rx="1.1" ry="1.9" fill="#f0d0ba"/><path d="M5 9.2 Q5 5.4 11.6 5.4 Q18 5.4 18 10 Q18.2 15.6 15.8 18.6 Q13.8 21.4 11.6 21.4 Q9 21.4 7 18.4 Q5 15 5 9.2 Z" fill="#f8dfcc"/><path d="M2.8 10.4 Q1.8 3.2 7 1 Q12.6 -0.8 18 0.6 Q19.2 3.2 17.4 6 Q16.4 7.4 14 7 Q9.6 6.2 6.6 7.2 Q5.8 9.2 5.2 11.4 Z" fill="#19141a"/><rect x="7.3" y="9.8" width="5" height="3.9" rx="0.9" fill="#e3dfdd" stroke="#45403f" stroke-width="0.85"/><rect x="13.3" y="9.7" width="4.6" height="3.8" rx="0.9" fill="#e3dfdd" stroke="#45403f" stroke-width="0.85"/><path d="M10.6 16.3 Q12.7 17.7 15 16.1" stroke="#8f5d52" stroke-width="0.9" fill="none"/><path d="M9.4 21 H13.6 V20.3 H9.4 Z" fill="#a3222e"/></g></svg><span class="t" style="left:463.60px;top:577px;font-size:13px;line-height:20px;color:#374151;letter-spacing:0.185px;">Mitchell Admin</span><span class="t" style="left:575.30px;top:577px;font-size:13px;line-height:20px;color:#374151;letter-spacing:0.014px;">Employee (to reimburse)</span><svg style="left:731.05px;top:579.65px" width="14.4" height="14.4" viewBox="0 0 14.4 14.4"><circle cx="7.2" cy="7.2" r="6.35" stroke="#2b3350" stroke-width="1.6" fill="none"/><path d="M7.4 3.8 V7.7 H5.1" stroke="#2b3350" stroke-width="1.15" fill="none"/></svg><svg style="left:840px;top:581.6px" width="10.7" height="11.8" viewBox="0 0 10.7 11.8"><g transform="translate(5.35 6.3) rotate(143) translate(-2.3 -7)"><path d="M4.15 3.6 V11.7 A1.85 1.85 0 0 1 0.45 11.7 V2 A1.3 1.3 0 0 1 3.05 2 V10.4 A0.75 0.75 0 0 1 1.55 10.4 V4.4" stroke="#343d52" stroke-width="1.0" fill="none" stroke-linecap="round"/></g></svg><span class="t" style="left:854.90px;top:577px;font-size:13px;line-height:20px;color:#374151;">1</span><span class="t" style="left:885.50px;top:577px;font-size:13px;line-height:20px;color:#111827;letter-spacing:-0.225px;">$ 289.00</span><svg style="left:943.8px;top:577.85px" width="66.3" height="17.2" viewBox="0 0 66.3 17.2"><rect width="66.3" height="17.2" rx="8.6" fill="#28a745"/></svg><span class="t" style="left:953.00px;top:578px;font-size:11px;line-height:16px;color:#fff;font-weight:700;letter-spacing:-0.217px;">Approved</span><svg style="left:14px;top:616.65px" width="14" height="14" viewBox="0 0 14 14"><rect x="0.5" y="0.5" width="13" height="13" rx="1.6" fill="none" stroke="#cfd2d6"/></svg><span class="t" style="left:212.50px;top:614px;font-size:13px;line-height:20px;color:#374151;letter-spacing:0.130px;">01/15/2023</span><span class="t" style="left:326.70px;top:614px;font-size:13px;line-height:20px;color:#374151;letter-spacing:0.100px;">Lunch with client</span><svg style="left:438.9px;top:613.45px" width="21.3" height="21.3" viewBox="0 0 21 21"><defs><clipPath id="cm9"><rect width="21" height="21" rx="3"/></clipPath><linearGradient id="gm9" x1="0" y1="0" x2="1" y2="1"><stop offset="0" stop-color="#a287e0"/><stop offset="0.55" stop-color="#7758c4"/><stop offset="1" stop-color="#5034a4"/></linearGradient></defs><g clip-path="url(#cm9)"><rect width="21" height="21" fill="url(#gm9)"/><path d="M20.6 2 V21 M2 20.6 H21" stroke="#3b1f9c" stroke-width="0.9" fill="none"/><ellipse cx="4.1" cy="12.8" rx="1" ry="1.8" fill="#d6a27f"/><path d="M4.6 9.5 Q4.6 4.6 10.7 4.6 Q16.7 4.6 16.7 9.8 Q16.9 14.4 15.1 17.4 Q13.1 20.3 10.9 20.3 Q8.4 20.3 6.4 17 Q4.6 13.8 4.6 9.5 Z" fill="#e3b793"/><path d="M3.7 11.2 Q2.9 2.2 10.5 2.2 Q17.8 2.2 17.1 9.4 L16.2 9 Q15.9 5.6 10.7 5.5 Q6 5.5 5.4 10.8 Z" fill="#5c3b22"/><path d="M5.5 13.2 Q8.3 15.2 10.8 14.5 Q13.4 15.2 16.3 12.9 Q16.3 17.6 14.1 19.3 Q11 21 8.2 19.1 Q5.8 17 5.5 13.2 Z" fill="#b5825b"/><ellipse cx="8.7" cy="9.8" rx="1" ry="0.7" fill="#46332a"/><ellipse cx="13.5" cy="9.8" rx="1" ry="0.7" fill="#46332a"/><ellipse cx="11.5" cy="12.4" rx="0.9" ry="0.55" fill="#a8755a"/></g></svg><span class="t" style="left:463.60px;top:614px;font-size:13px;line-height:20px;color:#374151;letter-spacing:-0.068px;">Marc Demo</span><span class="t" style="left:575.30px;top:614px;font-size:13px;line-height:20px;color:#374151;letter-spacing:0.014px;">Employee (to reimburse)</span><svg style="left:731.05px;top:616.7px" width="14.4" height="14.4" viewBox="0 0 14.4 14.4"><circle cx="7.2" cy="7.2" r="6.35" stroke="#2b3350" stroke-width="1.6" fill="none"/><path d="M7.4 3.8 V7.7 H5.1" stroke="#2b3350" stroke-width="1.15" fill="none"/></svg><svg style="left:840px;top:618.6500000000001px" width="10.7" height="11.8" viewBox="0 0 10.7 11.8"><g transform="translate(5.35 6.3) rotate(143) translate(-2.3 -7)"><path d="M4.15 3.6 V11.7 A1.85 1.85 0 0 1 0.45 11.7 V2 A1.3 1.3 0 0 1 3.05 2 V10.4 A0.75 0.75 0 0 1 1.55 10.4 V4.4" stroke="#343d52" stroke-width="1.0" fill="none" stroke-linecap="round"/></g></svg><span class="t" style="left:854.90px;top:614px;font-size:13px;line-height:20px;color:#374151;">1</span><span class="t" style="left:885.50px;top:614px;font-size:13px;line-height:20px;color:#111827;letter-spacing:-0.225px;">$ 152.80</span><svg style="left:943.8px;top:614.90px" width="44" height="17.2" viewBox="0 0 44 17.2"><rect width="44" height="17.2" rx="8.6" fill="#28a745"/></svg><span class="t" style="left:953.00px;top:615px;font-size:11px;line-height:16px;color:#fff;font-weight:700;letter-spacing:-0.227px;">Done</span><svg style="left:14px;top:653.70px" width="14" height="14" viewBox="0 0 14 14"><rect x="0.5" y="0.5" width="13" height="13" rx="1.6" fill="none" stroke="#cfd2d6"/></svg><span class="t" style="left:212.50px;top:652px;font-size:13px;line-height:20px;color:#374151;letter-spacing:0.130px;">01/15/2023</span><span class="t" style="left:326.70px;top:652px;font-size:13px;line-height:20px;color:#374151;letter-spacing:0.100px;">Lunch with client</span><svg style="left:438.9px;top:650.5px" width="21.3" height="21.3" viewBox="0 0 21 21"><defs><clipPath id="cm10"><rect width="21" height="21" rx="3"/></clipPath><linearGradient id="gm10" x1="0" y1="0" x2="1" y2="1"><stop offset="0" stop-color="#a287e0"/><stop offset="0.55" stop-color="#7758c4"/><stop offset="1" stop-color="#5034a4"/></linearGradient></defs><g clip-path="url(#cm10)"><rect width="21" height="21" fill="url(#gm10)"/><path d="M20.6 2 V21 M2 20.6 H21" stroke="#3b1f9c" stroke-width="0.9" fill="none"/><ellipse cx="4.1" cy="12.8" rx="1" ry="1.8" fill="#d6a27f"/><path d="M4.6 9.5 Q4.6 4.6 10.7 4.6 Q16.7 4.6 16.7 9.8 Q16.9 14.4 15.1 17.4 Q13.1 20.3 10.9 20.3 Q8.4 20.3 6.4 17 Q4.6 13.8 4.6 9.5 Z" fill="#e3b793"/><path d="M3.7 11.2 Q2.9 2.2 10.5 2.2 Q17.8 2.2 17.1 9.4 L16.2 9 Q15.9 5.6 10.7 5.5 Q6 5.5 5.4 10.8 Z" fill="#5c3b22"/><path d="M5.5 13.2 Q8.3 15.2 10.8 14.5 Q13.4 15.2 16.3 12.9 Q16.3 17.6 14.1 19.3 Q11 21 8.2 19.1 Q5.8 17 5.5 13.2 Z" fill="#b5825b"/><ellipse cx="8.7" cy="9.8" rx="1" ry="0.7" fill="#46332a"/><ellipse cx="13.5" cy="9.8" rx="1" ry="0.7" fill="#46332a"/><ellipse cx="11.5" cy="12.4" rx="0.9" ry="0.55" fill="#a8755a"/></g></svg><span class="t" style="left:463.60px;top:652px;font-size:13px;line-height:20px;color:#374151;letter-spacing:-0.068px;">Marc Demo</span><span class="t" style="left:575.30px;top:652px;font-size:13px;line-height:20px;color:#374151;letter-spacing:0.014px;">Employee (to reimburse)</span><svg style="left:731.05px;top:653.75px" width="14.4" height="14.4" viewBox="0 0 14.4 14.4"><circle cx="7.2" cy="7.2" r="6.35" stroke="#2b3350" stroke-width="1.6" fill="none"/><path d="M7.4 3.8 V7.7 H5.1" stroke="#2b3350" stroke-width="1.15" fill="none"/></svg><svg style="left:840px;top:655.7px" width="10.7" height="11.8" viewBox="0 0 10.7 11.8"><g transform="translate(5.35 6.3) rotate(143) translate(-2.3 -7)"><path d="M4.15 3.6 V11.7 A1.85 1.85 0 0 1 0.45 11.7 V2 A1.3 1.3 0 0 1 3.05 2 V10.4 A0.75 0.75 0 0 1 1.55 10.4 V4.4" stroke="#343d52" stroke-width="1.0" fill="none" stroke-linecap="round"/></g></svg><span class="t" style="left:854.90px;top:652px;font-size:13px;line-height:20px;color:#374151;">1</span><span class="t" style="left:885.50px;top:652px;font-size:13px;line-height:20px;color:#111827;letter-spacing:-0.225px;">$ 152.80</span><svg style="left:943.8px;top:651.95px" width="44" height="17.2" viewBox="0 0 44 17.2"><rect width="44" height="17.2" rx="8.6" fill="#28a745"/></svg><span class="t" style="left:953.00px;top:652px;font-size:11px;line-height:16px;color:#fff;font-weight:700;letter-spacing:-0.227px;">Done</span></main></body></html>
